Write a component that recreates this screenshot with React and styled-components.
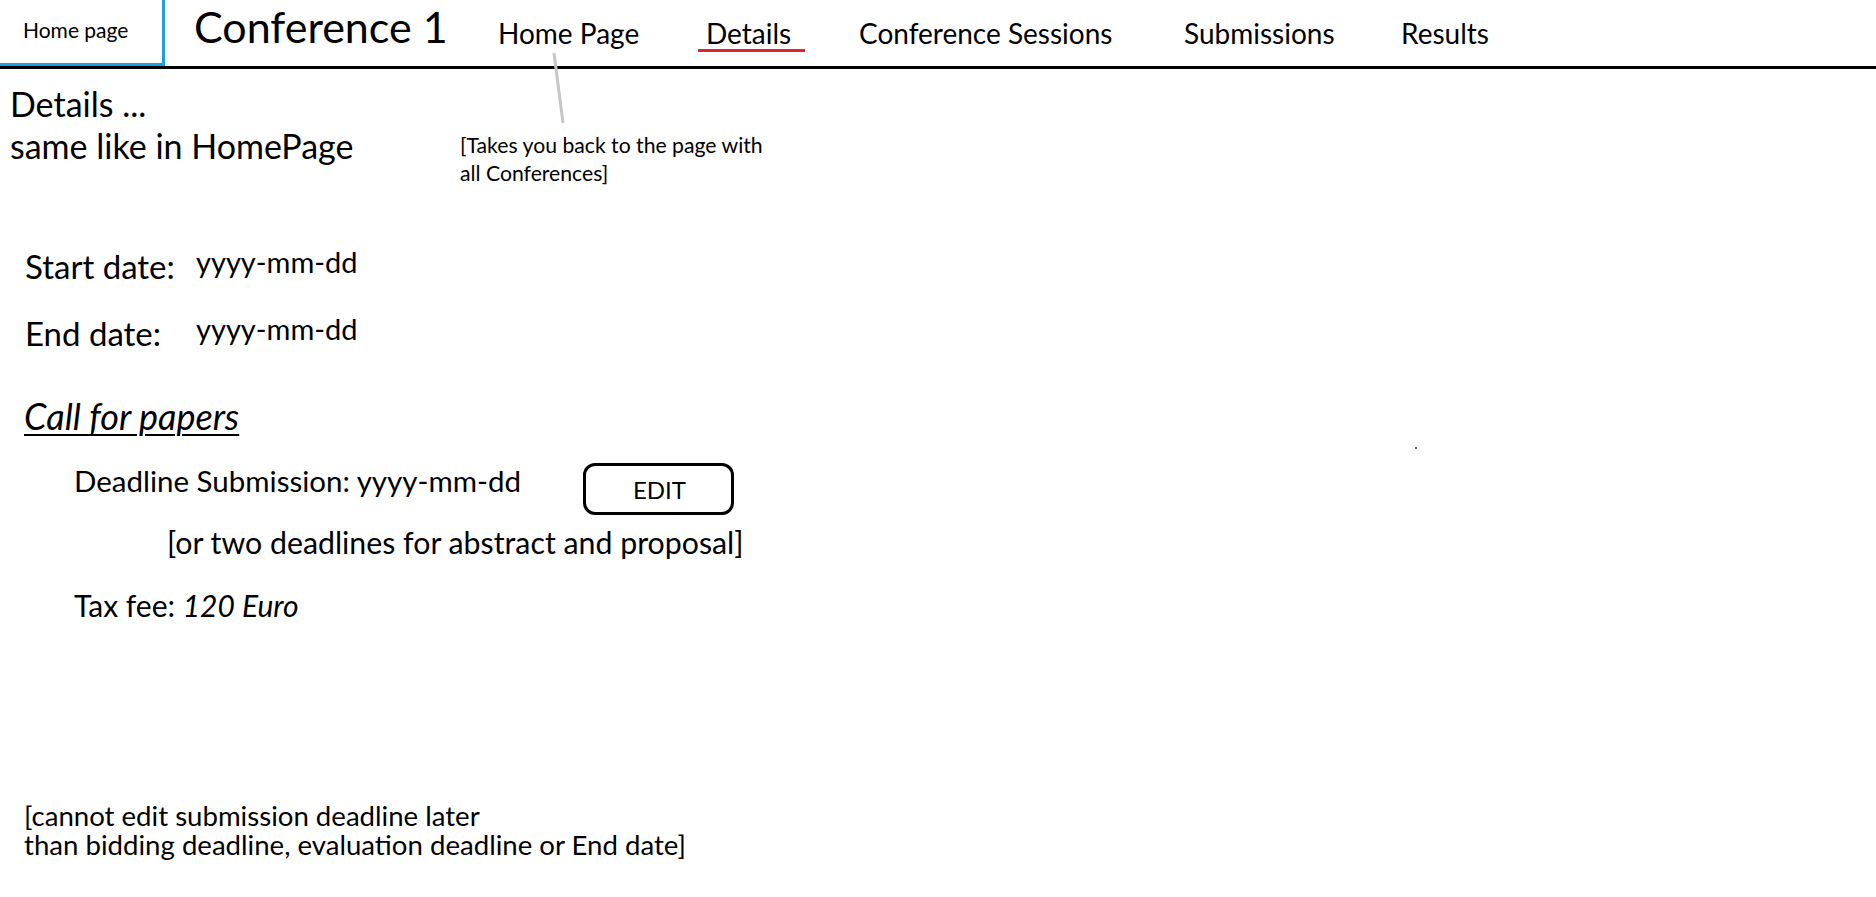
import styled, { createGlobalStyle } from 'styled-components'

const GlobalStyle = createGlobalStyle`
  html, body {
    margin: 0;
    padding: 0;
    background: #fff;
  }
  body {
    font-family: Lato, 'Liberation Sans', sans-serif;
    color: #000;
  }
`

const navItems = [
  { label: 'Home Page' },
  { label: 'Details', active: true },
  { label: 'Conference Sessions' },
  { label: 'Submissions' },
  { label: 'Results' },
]

export default function App() {
  return (
    <Page>
      <GlobalStyle />
      <Header>
        <HomeBox>Home page</HomeBox>
        <Title>Conference 1</Title>
        <Nav>
          {navItems.map((item) => (
            <NavCell key={item.label}>
              <NavLink $active={item.active}>{item.label}</NavLink>
            </NavCell>
          ))}
        </Nav>
      </Header>

      <Content>
        <Heading>
          Details ...
          <br />
          same like in HomePage
        </Heading>

        <Dates>
          <DateRow>
            <DateLabel>Start date:</DateLabel>
            <DateValue>yyyy-mm-dd</DateValue>
          </DateRow>
          <DateRow $gap>
            <DateLabel>End date:</DateLabel>
            <DateValue>yyyy-mm-dd</DateValue>
          </DateRow>
        </Dates>

        <SectionTitle>Call for papers</SectionTitle>

        <CallBlock>
          <DeadlineRow>
            <Line>Deadline Submission: yyyy-mm-dd</Line>
            <EditButton type="button">EDIT</EditButton>
          </DeadlineRow>
          <Hint>[or two deadlines for abstract and proposal]</Hint>
          <Fee>
            Tax fee: <em>120 Euro</em>
          </Fee>
        </CallBlock>

        <Note>
          [cannot edit submission deadline later
          <br />
          than bidding deadline, evaluation deadline or End date]
        </Note>
      </Content>

      {/* wireframe callout for the Home Page link */}
      <Connector width="20" height="80" viewBox="0 0 20 80">
        <line x1="4" y1="2" x2="13" y2="72" stroke="#c6c6c6" strokeWidth="3" />
      </Connector>
      <Callout>
        [Takes you back to the page with
        <br />
        all Conferences]
      </Callout>
      <Speck />
    </Page>
  )
}

const Page = styled.div`
  position: relative;
  width: 1876px;
  min-height: 897px;
  overflow: hidden;
`

const Header = styled.header`
  display: flex;
  height: 66px;
  border-bottom: 3px solid #000;
`

const HomeBox = styled.div`
  box-sizing: border-box;
  width: 165px;
  height: 66px;
  padding: 19px 0 0 23px;
  border-right: 3px solid #1ba1e2;
  border-bottom: 3px solid #1ba1e2;
  font-size: 21px;
  line-height: 1;
`

const Title = styled.h1`
  box-sizing: border-box;
  width: 333px;
  margin: 0;
  padding: 5px 0 0 29px;
  font-size: 43px;
  font-weight: 400;
  line-height: 1;
`

const Nav = styled.nav`
  display: grid;
  grid-template-columns: 208px 153px 325px 217px auto;
  padding-top: 19px;
`

const NavCell = styled.div`
  font-size: 28px;
  line-height: 1;
`

const NavLink = styled.span`
  position: relative;
  display: inline-block;

  &::after {
    content: '';
    display: ${(p) => (p.$active ? 'block' : 'none')};
    position: absolute;
    top: 30px;
    left: -8px;
    width: 107px;
    height: 3px;
    background: #e3242b;
  }
`

const Content = styled.main`
  display: flex;
  flex-direction: column;
  align-items: flex-start;
`

const Heading = styled.div`
  margin: 14px 0 0 10px;
  font-size: 34px;
  line-height: 42px;
`

const Dates = styled.div`
  display: flex;
  flex-direction: column;
  margin: 79px 0 0 25px;
`

const DateRow = styled.div`
  display: grid;
  grid-template-columns: 171px auto;
  align-items: start;
  margin-top: ${(p) => (p.$gap ? '27px' : '0')};
`

const DateLabel = styled.span`
  font-size: 33px;
  line-height: 40px;
`

const DateValue = styled.span`
  font-size: 29px;
  line-height: 32px;
`

const SectionTitle = styled.h2`
  margin: 43px 0 0 24px;
  font-size: 36px;
  font-style: italic;
  font-weight: 400;
  line-height: 40px;
  text-decoration: underline;
  text-decoration-thickness: 2px;
  text-underline-offset: 4px;
`

const CallBlock = styled.section`
  display: flex;
  flex-direction: column;
  margin: 25px 0 0 74px;
`

const DeadlineRow = styled.div`
  display: grid;
  grid-template-columns: 509px 151px;
  align-items: start;
`

const Line = styled.span`
  font-size: 29.5px;
  line-height: 40px;
`

const EditButton = styled.button`
  box-sizing: border-box;
  width: 151px;
  height: 52px;
  margin-top: 2px;
  padding: 0 0 0 2px;
  border: 3px solid #000;
  border-radius: 12px;
  background: #fff;
  font-family: Lato, 'Liberation Sans', sans-serif;
  font-size: 24px;
  color: #000;
  cursor: pointer;
`

const Hint = styled.div`
  margin: 7px 0 0 93px;
  font-size: 30.3px;
  line-height: 40px;
`

const Fee = styled.div`
  margin-top: 23px;
  font-size: 30px;
  line-height: 40px;

  em {
    font-style: italic;
  }
`

const Note = styled.div`
  margin: 176px 0 0 24px;
  font-size: 27.6px;
  line-height: 29px;
`

const Connector = styled.svg`
  position: absolute;
  left: 550px;
  top: 51px;
`

const Callout = styled.div`
  position: absolute;
  left: 460px;
  top: 131px;
  font-size: 21.2px;
  line-height: 28px;
`

const Speck = styled.span`
  position: absolute;
  left: 1415px;
  top: 447px;
  width: 2px;
  height: 2px;
  background: #666;
`
